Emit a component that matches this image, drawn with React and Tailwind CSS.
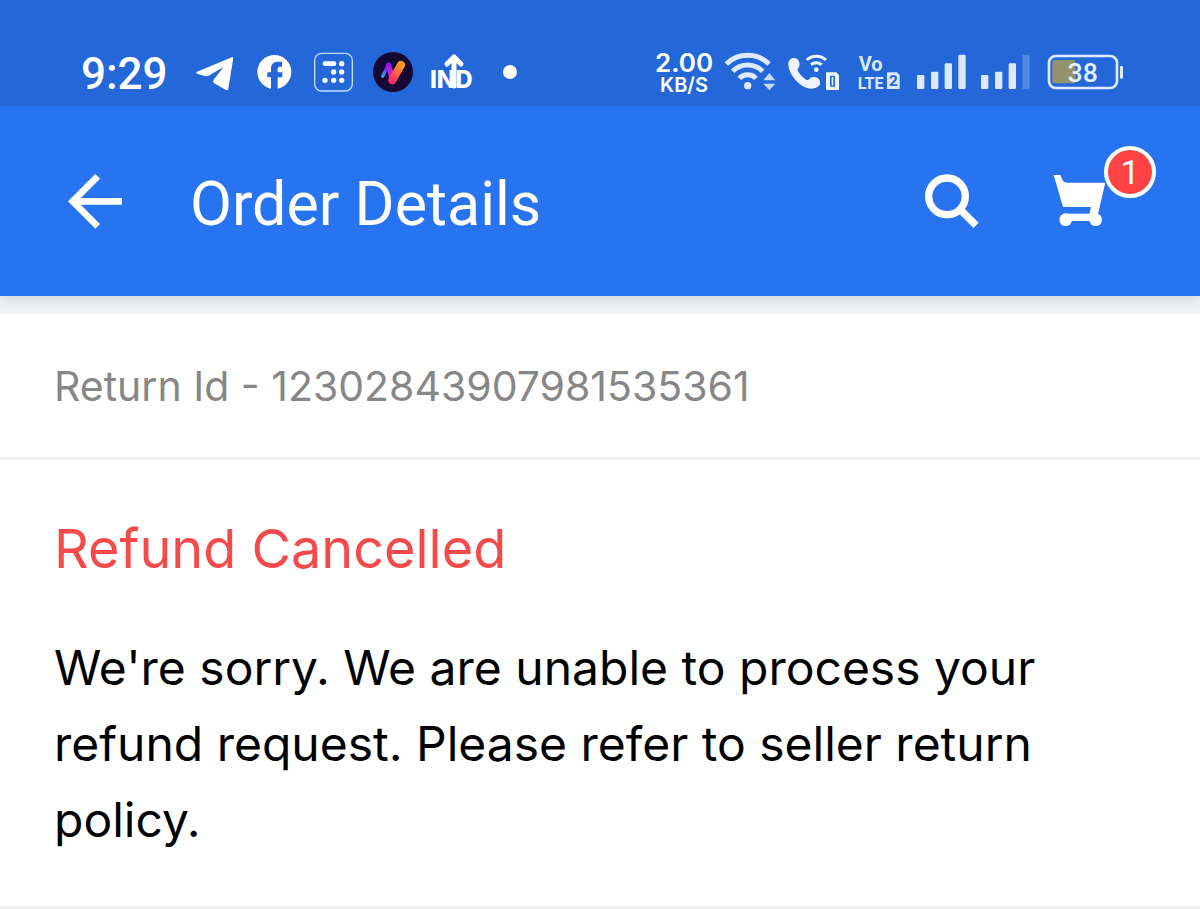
const TelegramIcon = () => (
  <svg viewBox="0 0 147 120" className="h-10 w-[49px]" fill="#fff" stroke="#fff" strokeWidth="4" strokeLinejoin="round">
    <path d="M28 61 L134 17 L119 110 C118 113 115 113 112 111 L80 92 C77 90 77 87 79 84 L107 48 C109 45 106 43 103 45 L62 69 C58 71 54 71 50 70 L30 64 C27 63 26 62 28 61Z" />
  </svg>
);

const FacebookIcon = () => (
  <svg viewBox="0 0 108 120" className="h-10 w-9">
    <circle cx="52" cy="60" r="51" fill="#fff" />
    <path
      d="M42 112V76H31V61H42V50C42 36 50 29 63 29H75V44H68C63 44 62 47 62 52V61H76V76H62V112Z"
      fill="#2467d8"
    />
  </svg>
);

const DotsIcon = () => (
  <svg viewBox="0 0 120 120" className="size-10" fill="#fff">
    <rect x="5" y="4" width="113" height="113" rx="21" fill="none" stroke="#b9e2ff" strokeWidth="4" />
    <rect x="29" y="28" width="41" height="14" rx="7" />
    <circle cx="86" cy="35" r="8" />
    <circle cx="62" cy="60" r="8" />
    <circle cx="86" cy="60" r="8" />
    <circle cx="36" cy="85" r="8" />
    <circle cx="62" cy="85" r="8" />
    <circle cx="86" cy="85" r="8" />
  </svg>
);

const NewsIcon = () => (
  <svg viewBox="0 0 120 120" className="size-10" fill="none" strokeLinecap="round">
    <defs>
      <linearGradient id="cool" gradientUnits="userSpaceOnUse" x1="28" y1="74" x2="48" y2="40">
        <stop offset="0" stopColor="#19b5f5" />
        <stop offset="0.7" stopColor="#8a1cf0" />
      </linearGradient>
      <linearGradient id="violet" gradientUnits="userSpaceOnUse" x1="46" y1="38" x2="58" y2="84">
        <stop offset="0" stopColor="#8a1cf0" />
        <stop offset="1" stopColor="#ff2d78" />
      </linearGradient>
      <linearGradient id="warm" gradientUnits="userSpaceOnUse" x1="58" y1="86" x2="84" y2="36">
        <stop offset="0" stopColor="#ff2d6e" />
        <stop offset="1" stopColor="#ff9d1c" />
      </linearGradient>
    </defs>
    <circle cx="60" cy="60" r="60" fill="#170733" />
    <path d="M29 73 46 39" stroke="url(#cool)" strokeWidth="10" />
    <path d="M47 40 58 82" stroke="url(#violet)" strokeWidth="16" />
    <path d="M58 85 84 39" stroke="url(#warm)" strokeWidth="24" />
  </svg>
);

const IndIcon = () => (
  <svg viewBox="0 0 44 40" className="h-10 w-11 overflow-visible">
    <text x="-3" y="36" fill="#fff" fontFamily="Inter, sans-serif" fontSize="24" fontWeight="800">
      IND
    </text>
    <path d="M21 34V6M14 12l7-7 7 7" fill="none" stroke="#fff" strokeWidth="5" strokeLinecap="round" strokeLinejoin="round" />
  </svg>
);

const WifiIcon = () => (
  <svg viewBox="0 0 156 120" className="h-10 w-13" fill="none" stroke="#dce9ff" strokeWidth="15">
    <circle cx="71" cy="101" r="11" fill="#dce9ff" stroke="none" />
    <path d="M46 79A34 34 0 0 1 96 79" />
    <path d="M26 58A63 63 0 0 1 116 58" />
    <path d="M7 36A92 92 0 0 1 135 36" />
    <path d="M136 63 154 85H118ZM136 115 154 95H118Z" fill="#c4d9fb" stroke="none" />
  </svg>
);

const WifiCallIcon = () => (
  <svg viewBox="0 0 156 120" className="h-10 w-13" fill="#eef5ff">
    <path d="M1 38C0 25 9 17 19 18C30 19 37 30 34 41C32 48 27 50 30 57C36 68 45 78 56 84C63 86 67 73 79 74C92 76 99 87 96 97C90 110 68 114 51 106C25 93 3 65 1 38Z" />
    <circle cx="85" cy="53" r="7" />
    <g fill="none" stroke="#eef5ff" strokeWidth="9">
      <path d="M69 38A24 24 0 0 1 101 38" />
      <path d="M56 24A42 42 0 0 1 114 24" />
    </g>
    <path
      d="M114 61H145L153 70V114H114ZM126 71V104H141V71Z"
      fillRule="evenodd"
    />
    <path d="M131 75h5v25h-5z" />
  </svg>
);

const VolteIcon = () => (
  <svg viewBox="0 0 156 120" className="h-10 w-13" fill="#dce9ff" fontFamily="Roboto, sans-serif" fontWeight="700">
    <text x="20" y="58" fontSize="60">
      Vo
    </text>
    <text x="17" y="110" fontSize="48">
      LTE
    </text>
    <path d="M105 61H135L143 70V111H105Z" />
    <text x="111" y="102" fontSize="46" fill="#2467d8">
      2
    </text>
  </svg>
);

const SignalIcon = ({ full }) => (
  <svg viewBox="0 0 156 120" className="h-10 w-13" fill="#dce9ff">
    <rect x="3" y="69" width="22" height="42" rx="4" />
    <rect x="45" y="59" width="22" height="52" rx="4" />
    <rect x="86" y="34" width="22" height="77" rx="4" />
    <rect x="127" y="8" width="22" height="103" rx="4" fillOpacity={full ? 1 : 0.25} />
  </svg>
);

const BatteryIcon = ({ level }) => (
  <svg viewBox="0 0 240 120" className="h-10 w-20">
    <rect x="25" y="24" width="70" height="70" rx="8" fill="#94926f" />
    <rect x="15" y="12" width="204" height="96" rx="20" fill="none" stroke="#dcebff" strokeWidth="8" />
    <rect x="228" y="42" width="9" height="38" rx="3" fill="#dcebff" />
    <text x="116" y="91" textAnchor="middle" fill="#e6f0ff" fontFamily="Roboto, sans-serif" fontSize="80" fontWeight="500">
      {level}
    </text>
  </svg>
);

const StatusBar = () => (
  <div className="flex items-center justify-between bg-[#2467d8] pt-12 pr-19 pb-[10px] pl-[81px] text-white">
    <div className="flex items-center gap-5">
      <span className="pt-1 font-['Roboto',sans-serif] text-[44px] leading-11 font-medium">9:29</span>
      <TelegramIcon />
      <FacebookIcon />
      <DotsIcon />
      <NewsIcon />
      <IndIcon />
      <span className="ml-[6px] size-[14px] rounded-full bg-white" />
    </div>
    <div className="flex items-center gap-3">
      <div className="flex w-14 flex-col items-center pt-1 font-['Inter',sans-serif] font-semibold">
        <span className="text-[26px] leading-[22px]">2.00</span>
        <span className="text-xl leading-[22px]">KB/S</span>
      </div>
      <WifiIcon />
      <WifiCallIcon />
      <VolteIcon />
      <SignalIcon full />
      <SignalIcon />
      <BatteryIcon level={38} />
    </div>
  </div>
);

const Header = ({ cartCount }) => (
  <header className="relative flex items-center bg-[#2873f0] pt-[62px] pr-22 pb-15 pl-16 text-white shadow-[0_6px_8px_rgba(0,0,0,0.08)]">
    <button type="button" aria-label="Back" className="size-16">
      <svg viewBox="0 0 192 192" className="size-16" fill="none" stroke="currentColor" strokeWidth="20">
        <path d="M101 19 26 94 101 169M26 94H174" />
      </svg>
    </button>
    <h1 className="ml-[62px] pt-1 font-['Roboto',sans-serif] text-[61px] leading-16">Order Details</h1>
    <div className="ml-auto flex gap-16">
      <button type="button" aria-label="Search" className="size-16">
        <svg viewBox="0 0 192 192" className="size-16" fill="none" stroke="currentColor" strokeWidth="22">
          <circle cx="81" cy="79" r="55" />
          <path d="M118 116 168 166" />
        </svg>
      </button>
      <button type="button" aria-label="Cart" className="relative size-16">
        <svg viewBox="0 0 192 192" className="size-16" fill="currentColor">
          <path d="M17 15H38C42 32 48 38 58 38H168Q172 38 171 42L150 132H124L129 111H48Q45 111 44 107Z" />
          <path d="M53 131H143V153H53Z" />
          <circle cx="53" cy="149" r="19" />
          <circle cx="143" cy="149" r="19" />
        </svg>
        <span className="absolute -top-6 -right-11 flex size-[52px] items-center justify-center rounded-full border-4 border-white bg-[#ff4343] font-['Roboto',sans-serif] text-[34px] leading-none">
          {cartCount}
        </span>
      </button>
    </div>
  </header>
);

const App = () => (
  <div className="min-h-screen bg-white font-['Inter',sans-serif]">
    <StatusBar />
    <Header cartCount={1} />
    <main>
      <div className="h-[18px] bg-[#f1f2f4]" />
      <section className="border-b-3 border-[#efefef] px-[54px] pt-12 pb-[47px]">
        <p className="text-[41px] leading-12 text-[#878787]">Return Id - 12302843907981535361</p>
      </section>
      <section className="border-b-3 border-[#efefef] px-[54px] pt-[51px] pb-12">
        <h2 className="text-[54px] leading-[76px] text-[#f54a4a]">Refund Cancelled</h2>
        <p className="mt-[43px] max-w-[1020px] text-5xl leading-[76px] text-black">
          We're sorry. We are unable to process your refund request. Please refer to seller return policy.
        </p>
      </section>
    </main>
  </div>
);

export default App;
